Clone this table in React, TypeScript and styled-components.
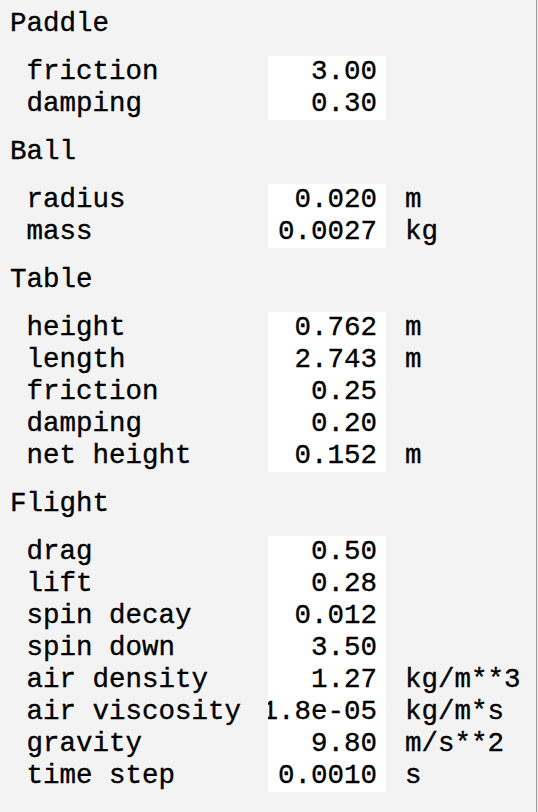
import React from "react";
import styled, { createGlobalStyle } from "styled-components";

const Global = createGlobalStyle`
  html, body { margin: 0; padding: 0; background: #f3f3f3; }
  body { font-family: "Liberation Mono", "DejaVu Sans Mono", monospace; }
`;

const Frame = styled.div`
  display: flex;
  width: 538px;
  height: 812px;
  overflow: hidden;
`;

const Panel = styled.div`
  width: 526px;
  padding: 8px 0 0 10px;
  background: #f3f3f3;
  border-right: 1px solid #9c9c9c;
  color: #000;
  font-size: 27.5px;
  line-height: 32px;
  -webkit-text-stroke: 0.35px #000;
  display: flex;
  flex-direction: column;
  gap: 16px;
`;

const Edge = styled.div`
  flex: 1;
  background: #e9e9e9;
`;

const Section = styled.section`
  display: flex;
  flex-direction: column;
  gap: 16px;
`;

const Heading = styled.div`
  height: 32px;
  white-space: pre;
`;

const Rows = styled.div`
  display: grid;
  grid-template-columns: 258px 118px auto;
`;

const Label = styled.div`
  padding-left: 1ch;
  white-space: pre;
`;

const Value = styled.div`
  background: #fff;
  display: flex;
  justify-content: flex-end;
  overflow: hidden;
  white-space: pre;
  padding-right: 9px;
`;

const Unit = styled.div`
  padding-left: 19px;
  white-space: pre;
`;

type Param = [string, string, string?];

const sections: { title: string; params: Param[] }[] = [
  { title: "Paddle", params: [["friction", "3.00"], ["damping", "0.30"]] },
  { title: "Ball", params: [["radius", "0.020", "m"], ["mass", "0.0027", "kg"]] },
  {
    title: "Table",
    params: [
      ["height", "0.762", "m"],
      ["length", "2.743", "m"],
      ["friction", "0.25"],
      ["damping", "0.20"],
      ["net height", "0.152", "m"],
    ],
  },
  {
    title: "Flight",
    params: [
      ["drag", "0.50"],
      ["lift", "0.28"],
      ["spin decay", "0.012"],
      ["spin down", "3.50"],
      ["air density", "1.27", "kg/m**3"],
      ["air viscosity", "1.8e-05", "kg/m*s"],
      ["gravity", "9.80", "m/s**2"],
      ["time step", "0.0010", "s"],
    ],
  },
];

export default function App() {
  return (
    <Frame>
      <Global />
      <Panel>
        {sections.map((s) => (
          <Section key={s.title}>
            <Heading>{s.title}</Heading>
            <Rows>
              {s.params.map(([name, val, unit]) => (
                <React.Fragment key={name}>
                  <Label>{name}</Label>
                  <Value>
                    <span>{val}</span>
                  </Value>
                  <Unit>{unit ?? ""}</Unit>
                </React.Fragment>
              ))}
            </Rows>
          </Section>
        ))}
      </Panel>
      <Edge />
    </Frame>
  );
}
